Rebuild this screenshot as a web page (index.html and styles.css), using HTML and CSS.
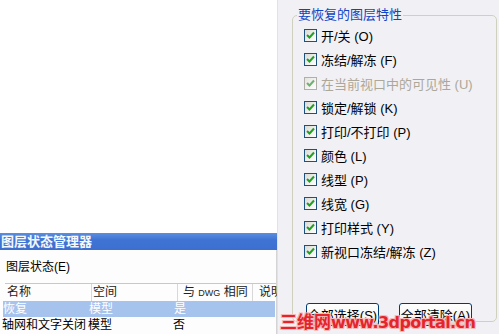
FILE: index.html
```html
<!DOCTYPE html>
<html lang="zh-CN">
<head>
    <meta charset="UTF-8">
    <title>图层状态管理器</title>
    <link rel="stylesheet" href="styles.css">
</head>
<body>
    <div class="screen">
        <div class="left">
            <div class="blank"></div>
            <div class="titlebar">图层状态管理器</div>
            <div class="manager">
                <div class="label">图层状态(<u>E</u>)</div>
                <div class="table">
                    <div class="row head">
                        <span class="c1">名称</span>
                        <span class="c2">空间</span>
                        <span class="c3">与 <small>DWG</small> 相同</span>
                        <span class="c4">说明</span>
                    </div>
                    <div class="row selected">
                        <span class="c1">恢复</span>
                        <span class="c2">模型</span>
                        <span class="c3">是</span>
                    </div>
                    <div class="row">
                        <span class="c1">轴网和文字关闭</span>
                        <span class="c2">模型</span>
                        <span class="c3">否</span>
                    </div>
                </div>
            </div>
        </div>
        <div class="props">
            <fieldset class="group">
                <legend>要恢复的图层特性</legend>
                <div class="opt"><span class="box"></span><span>开/关 (<u>O</u>)</span></div>
                <div class="opt"><span class="box"></span><span>冻结/解冻 (<u>F</u>)</span></div>
                <div class="opt disabled"><span class="box"></span><span>在当前视口中的可见性 (<u>U</u>)</span></div>
                <div class="opt"><span class="box"></span><span>锁定/解锁 (<u>K</u>)</span></div>
                <div class="opt"><span class="box"></span><span>打印/不打印 (<u>P</u>)</span></div>
                <div class="opt"><span class="box"></span><span>颜色 (<u>L</u>)</span></div>
                <div class="opt"><span class="box"></span><span>线型 (<u>P</u>)</span></div>
                <div class="opt"><span class="box"></span><span>线宽 (<u>G</u>)</span></div>
                <div class="opt"><span class="box"></span><span>打印样式 (<u>Y</u>)</span></div>
                <div class="opt"><span class="box"></span><span>新视口冻结/解冻 (<u>Z</u>)</span></div>
                <div class="buttons">
                    <button>全部选择(<u>S</u>)</button>
                    <button>全部清除(<u>A</u>)</button>
                </div>
            </fieldset>
        </div>
        <div class="watermark"><span class="cn">三维网</span>www.3dportal.cn</div>
    </div>
</body>
</html>
```

FILE: styles.css
```css
body {
    margin: 0;
    font-family: "Liberation Sans", "Noto Sans CJK SC", sans-serif;
    font-size: 12px;
    color: #000;
    background: #ffffff;
}
.screen {
    position: relative;
    display: flex;
    width: 499px;
    height: 334px;
    overflow: hidden;
}
.left {
    width: 277px;
    display: flex;
    flex-direction: column;
}
.blank {
    height: 233px;
    background: #ffffff;
}
.titlebar {
    height: 17px;
    line-height: 17px;
    padding-left: 1px;
    font-size: 13px;
    font-weight: bold;
    color: #f4f8ff;
    background: linear-gradient(#5b8ee0, #3f74d4 40%, #3c6fd0);
}
.manager {
    flex: 1;
    background: #fdfdfd;
    border-right: 1px solid #d4d4d4;
}
.label {
    height: 17px;
    line-height: 17px;
    margin: 9px 0 7px 6px;
}
.label u, .opt u, button u {
    text-decoration: none;
}
.row {
    display: flex;
    height: 16px;
    line-height: 16px;
    white-space: nowrap;
}
.row span {
    flex: none;
    box-sizing: border-box;
}
.head {
    height: 17px;
    line-height: 17px;
    margin-left: 5px;
    border-top: 1px solid #c8c8c8;
    color: #222;
}
.head span {
    border-right: 1px solid #d8d8d8;
}
.head small {
    font-size: 9px;
}
.head .c1 { width: 83px; padding-left: 10px; }
.head .c2 { width: 85px; padding-left: 10px; }
.head .c3 { width: 75px; padding-left: 5px; }
.head .c4 { border: none; padding-left: 6px; }
.row .c1 { width: 87px; padding-left: 2px; }
.row .c2 { width: 86px; padding-left: 1px; }
.selected {
    margin-left: 3px;
    margin-right: 1px;
    background: #a6c3ee;
    color: #ffffff;
}
.selected .c1 { width: 85px; padding-left: 0; }
.props {
    flex: 1;
    background: #f1f0f4;
    border-left: 1px solid #e2e2e6;
}
.group {
    margin: 7px 2px 0 14px;
    padding: 0 0 0 11px;
    height: 315px;
    box-sizing: border-box;
    border: 1px solid #d0d0bf;
    border-radius: 5px;
}
.group legend {
    padding: 0 1px;
    margin-left: -7px;
    font-size: 13px;
    line-height: 16px;
    color: #1144c4;
}
.opt {
    display: flex;
    align-items: center;
    height: 24px;
    gap: 4px;
    font-size: 13px;
}
.box {
    width: 11px;
    height: 11px;
    border: 1px solid #1c5180;
    background-color: #fff;
    background-image: url("data:image/svg+xml,%3Csvg xmlns='http://www.w3.org/2000/svg' width='11' height='11'%3E%3Cpath d='M2 5 L4.5 7.5 L9 2.5' fill='none' stroke='%2321a121' stroke-width='2'/%3E%3C/svg%3E"), linear-gradient(135deg, #dcdcd4, #ffffff);
}
.disabled {
    color: #aca899;
}
.disabled .box {
    border-color: #b0b0a8;
    background-image: url("data:image/svg+xml,%3Csvg xmlns='http://www.w3.org/2000/svg' width='11' height='11'%3E%3Cpath d='M2 5 L4.5 7.5 L9 2.5' fill='none' stroke='%2370b070' stroke-width='2'/%3E%3C/svg%3E"), linear-gradient(135deg, #e4e4de, #ffffff);
}
.buttons {
    display: flex;
    gap: 20px;
    margin: 40px 0 0 2px;
}
.buttons button {
    width: 73px;
    height: 23px;
    padding: 0;
    font-family: inherit;
    font-size: 13px;
    border: 1px solid #003c74;
    border-radius: 3px;
    background: linear-gradient(#ffffff, #f3f3ef 70%, #d6d0c5);
    color: #000;
}
.watermark {
    position: absolute;
    left: 280px;
    top: 308px;
    font-family: "DejaVu Sans", sans-serif;
    font-size: 16px;
    font-weight: bold;
    color: #e4262c;
    letter-spacing: -0.6px;
    text-shadow: 1px 1px 0 #f7b8b8, -1px -1px 0 #f7b8b8, 1px -1px 0 #f7b8b8, -1px 1px 0 #f7b8b8;
}
.watermark .cn {
    font-family: "Noto Sans CJK SC", sans-serif;
    font-size: 17px;
    letter-spacing: 0;
}
```
